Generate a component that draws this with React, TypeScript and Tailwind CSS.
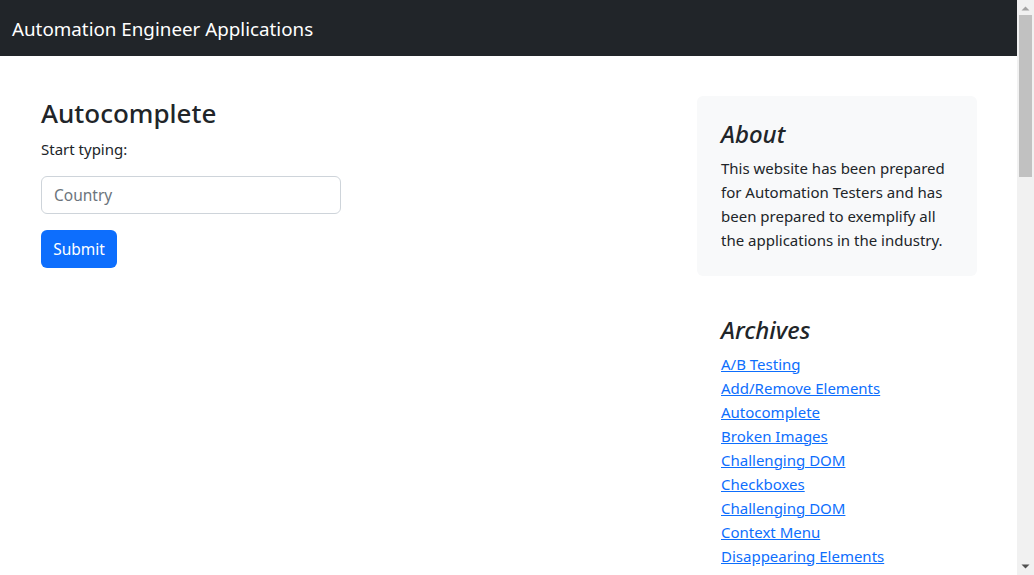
const archives = [
  "A/B Testing",
  "Add/Remove Elements",
  "Autocomplete",
  "Broken Images",
  "Challenging DOM",
  "Checkboxes",
  "Challenging DOM",
  "Context Menu",
  "Disappearing Elements",
  "Drag and Drop",
  "Dropdown",
  "Dynamic Content",
  "Dynamic Controls",
  "Dynamic Loading",
];

function Scrollbar() {
  return (
    <div className="sticky top-0 h-screen w-[17px] shrink-0 bg-[#f1f1f1] flex flex-col items-center">
      <svg width="17" height="17" viewBox="0 0 17 17" className="shrink-0">
        <path d="M4.5 10.5 L8.5 6.5 L12.5 10.5 Z" fill="#a3a3a3" />
      </svg>
      <div className="w-[13px] h-[162px] bg-[#c1c1c1] mt-[-2px]" />
      <div className="flex-1" />
      <svg width="17" height="17" viewBox="0 0 17 17" className="shrink-0">
        <path d="M4.5 6.5 L12.5 6.5 L8.5 10.5 Z" fill="#505050" />
      </svg>
    </div>
  );
}

export default function App() {
  return (
    <div className="flex bg-white text-[#212529] font-['Noto_Sans',sans-serif] text-[15px] leading-6">
      <div className="flex-1 min-w-0">
        <nav className="h-14 bg-[#212529] flex items-center px-3">
          <span className="text-white text-[18.8px] leading-[30px] mt-[2px]">Automation Engineer Applications</span>
        </nav>

        <div className="flex pt-10 pl-[41px]">
          <main className="w-[620px] flex flex-col items-start">
            <h3 className="text-[26px] leading-[33.6px] font-medium mb-2 mt-[1px]">Autocomplete</h3>
            <p className="mb-[15px] mt-[-2px]">Start typing:</p>
            <input
              type="text"
              placeholder="Country"
              className="w-[300px] h-[38px] px-3 py-1.5 border border-[#ced4da] rounded-md text-[15.5px] placeholder:text-[#6c757d] outline-none"
            />
            <button className="mt-4 h-[38px] w-[76px] bg-[#0d6efd] text-white rounded-md text-[15.5px]">Submit</button>
          </main>

          <aside className="ml-auto mr-[40px] w-[280px]">
            <div className="p-6 mb-4 bg-[#f8f9fa] rounded-md">
              <h4 className="italic text-2xl leading-[28.8px] font-medium mb-[7px]">About</h4>
              <p>
                This website has been prepared for Automation Testers and has been prepared to exemplify all the
                applications in the industry.
              </p>
            </div>
            <div className="px-6 pt-6">
              <h4 className="italic text-2xl leading-[28.8px] font-medium mb-[7px]">Archives</h4>
              <ol className="list-none">
                {archives.map((a, i) => (
                  <li key={i}>
                    <a href="#" className="text-[#0d6efd] underline">
                      {a}
                    </a>
                  </li>
                ))}
              </ol>
            </div>
          </aside>
        </div>
      </div>
      <Scrollbar />
    </div>
  );
}
